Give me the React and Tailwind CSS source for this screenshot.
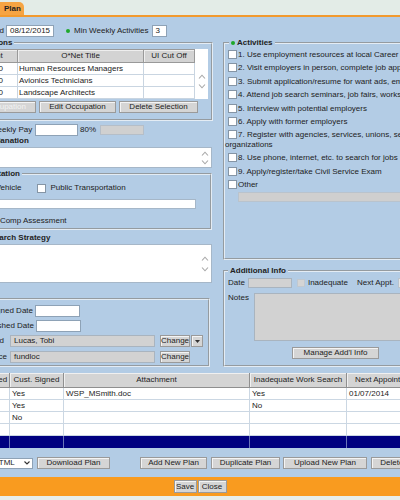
import React from 'react';

// shared looks for the old-school form controls
const fs = 'border-2 [border-style:groove] border-[#e4ecf4]';
const inp = 'h-[12px] bg-white border border-[#8ea2b6] px-[3px] leading-[10px]';
const gray = 'bg-[#d2d2d2] border border-[#a9b4bf]';
const btn = 'h-[12px] bg-[#d5d5d5] border border-[#9a9a9a] shadow-[inset_1px_1px_0_#f4f4f4] leading-[10px] text-center whitespace-nowrap';
const lbl = 'flex justify-end whitespace-nowrap shrink-0';

const Box = ({ className = '' }) => (
  <span className={`inline-block w-[9px] h-[9px] bg-white border border-[#8595a5] ${className}`} />
);

const Arrows = ({ gap }) => (
  <div className={`flex flex-col items-center justify-center w-[10px] ${gap}`}>
    <svg width="8" height="5" viewBox="0 0 8 5">
      <path d="M1 4.5 L4 1.2 L7 4.5" fill="none" stroke="#a8a8a8" strokeWidth="1.1" />
    </svg>
    <svg width="8" height="5" viewBox="0 0 8 5">
      <path d="M1 0.5 L4 3.8 L7 0.5" fill="none" stroke="#a8a8a8" strokeWidth="1.1" />
    </svg>
  </div>
);

const occupations = [
  ['10.00', 'Human Resources Managers'],
  ['10.00', 'Avionics Technicians'],
  ['10.00', 'Landscape Architects'],
];

const activities = [
  '1. Use employment resources at local Career Center',
  '2. Visit employers in person, complete job applications',
  '3. Submit application/resume for want ads, employers',
  '4. Attend job search seminars, job fairs, workshops',
  '5. Interview with potential employers',
  '6. Apply with former employers',
  '7. Register with agencies, services, unions, self-help organizations',
  '8. Use phone, internet, etc. to search for jobs',
  '9. Apply/register/take Civil Service Exam',
  'Other',
];

const planCols = [
  { label: 'Staff Signed', w: 'w-[48px]' },
  { label: 'Cust. Signed', w: 'w-[54px]' },
  { label: 'Attachment', w: 'w-[186px]' },
  { label: 'Inadequate Work Search', w: 'w-[97px]' },
  { label: 'Next Appointment', w: 'w-[80px]' },
];

const plans = [
  ['', 'Yes', 'WSP_MSmith.doc', 'Yes', '01/07/2014'],
  ['', 'Yes', '', 'No', ''],
  ['', 'No', '', '', ''],
  ['', '', '', '', ''],
];

export default function App() {
  return (
    <div className="w-[400px] h-[500px] overflow-hidden bg-[#b3cce5] font-['Liberation_Sans',Arial,sans-serif] text-[8px] leading-[10px] text-[#222]">
      <div className="h-[15px] bg-[#e3ece7] flex items-end">
        <div className="h-[13px] pl-[4px] pr-[3px] bg-[#f6a443] rounded-tr-[5px] font-bold leading-[13px]">Plan</div>
      </div>
      <div className="h-[2px] bg-[#f29a2e]" />

      <div className="ml-[-60px] w-[520px]">
        <div className="flex items-center h-[12px] mt-[8px]">
          <span className={`${lbl} w-[64px]`}>Plan Created</span>
          <div className={`${inp} ml-[2px] w-[48px]`}>08/12/2015</div>
          <span className="ml-[12px] w-[4px] h-[4px] rounded-full bg-[#1fa82a]" />
          <span className="ml-[4px]">Min Weekly Activities</span>
          <div className={`${inp} ml-[3px] w-[15px]`}>3</div>
        </div>

        <div className="flex items-start mt-[1px]">
          {/* left column */}
          <div className="w-[273px] shrink-0">
            <fieldset className={`${fs} ml-[15px] w-[258px] pb-[6px]`}>
              <legend className="ml-[5px] px-[2px] font-bold">Occupations</legend>
              <div className="flex mt-[1px] ml-[3px]">
                <div className="w-[235px]">
                  <div className="flex h-[14px] leading-[12px]">
                    <div className="w-[58px] bg-[#d3d3d3] border border-[#999] shadow-[inset_1px_1px_0_#eee] text-center">Percent</div>
                    <div className="w-[126px] bg-[#d3d3d3] border border-l-0 border-[#999] shadow-[inset_1px_1px_0_#eee] text-center">O*Net Title</div>
                    <div className="w-[51px] bg-[#d3d3d3] border border-l-0 border-[#999] shadow-[inset_1px_1px_0_#eee] text-center">UI Cut Off</div>
                  </div>
                  {occupations.map(([p, t]) => (
                    <div key={t} className="flex h-[12px] bg-white leading-[11px]">
                      <div className="w-[58px] border-r border-b border-[#c9d5e1] text-right pr-[14px]">{p}</div>
                      <div className="w-[126px] border-r border-b border-[#c9d5e1] pl-[1px] whitespace-nowrap">{t}</div>
                      <div className="w-[51px] border-r border-b border-[#c9d5e1]" />
                    </div>
                  ))}
                </div>
                <div className="w-[13px] bg-white flex pt-[14px] justify-center">
                  <Arrows gap="gap-[5px]" />
                </div>
              </div>
              <div className="flex gap-[3px] mt-[2px] ml-[2px]">
                <div className={`${btn} w-[77px] text-[#f2f2f2]`}>Add Occupation</div>
                <div className={`${btn} w-[77px]`}>Edit Occupation</div>
                <div className={`${btn} w-[79px]`}>Delete Selection</div>
              </div>
            </fieldset>

            <div className="flex items-center h-[12px] mt-[3px] ml-[35px]">
              <span className="w-[60px] whitespace-nowrap">Min Weekly Pay</span>
              <div className={`${inp} w-[43px]`} />
              <span className="ml-[2px] w-[20px]">80%</span>
              <div className="h-[10px] w-[44px] bg-[#d0d0d0] border border-[#b5bec8]" />
            </div>
            <div className="ml-[27px] font-bold whitespace-nowrap">Pay Explanation</div>
            <div className="ml-[33px] w-[239px] h-[21px] mt-[1px] bg-white border border-[#a6b7c8] flex justify-end pr-[1px]">
              <Arrows gap="gap-[4px]" />
            </div>

            <fieldset className={`${fs} ml-[15px] w-[257px] mt-[1px] pb-[2px]`}>
              <legend className="ml-[5px] px-[2px] font-bold">Transportation</legend>
              <div className="flex items-center h-[10px] mt-[4px]">
                <Box className="ml-[9px]" />
                <span className="ml-[2px] whitespace-nowrap">Own Vehicle</span>
                <Box className="ml-[16px]" />
                <span className="ml-[4px] whitespace-nowrap">Public Transportation</span>
              </div>
              <div className="ml-[9px] w-[230px] h-[10px] mt-[6px] bg-white border border-[#a6b7c8]" />
              <div className="flex items-center h-[10px] mt-[7px]">
                <Box className="ml-[11px]" />
                <span className="ml-[2px] whitespace-nowrap">Skills Comp Assessment</span>
              </div>
            </fieldset>

            <div className="ml-[33px] mt-[3px] font-bold whitespace-nowrap">Job Search Strategy</div>
            <div className="ml-[33px] w-[239px] h-[39px] mt-[1px] bg-white border border-[#a6b7c8] flex justify-end pr-[1px]">
              <Arrows gap="gap-[6px]" />
            </div>

            <fieldset className={`${fs} ml-[15px] w-[255px] mt-[15px] pb-[2px]`}>
              <div className="flex items-center h-[12px] mt-[5px]">
                <span className={`${lbl} w-[76px]`}>Staff Signed Date</span>
                <div className={`${inp} ml-[2px] w-[45px]`} />
              </div>
              <div className="flex items-center h-[12px] mt-[3px]">
                <span className={`${lbl} w-[77px]`}>Cust. Finished Date</span>
                <div className={`${inp} ml-[2px] w-[45px]`} />
              </div>
              <div className="flex items-center h-[12px] mt-[3px]">
                <span className={`${lbl} w-[47px]`}>Staff Assigned</span>
                <div className={`${gray} h-[12px] ml-[6px] w-[145px] pl-[3px] leading-[10px]`}>Lucas, Tobi</div>
                <div className={`${btn} ml-[5px] w-[30px]`}>Change</div>
                <div className={`${btn} ml-[1px] w-[12px] flex items-center justify-center`}>
                  <svg width="5" height="3" viewBox="0 0 5 3"><path d="M0 0 H5 L2.5 3 Z" fill="#333" /></svg>
                </div>
              </div>
              <div className="flex items-center h-[12px] mt-[4px]">
                <span className={`${lbl} w-[50px]`}>Funding Source</span>
                <div className={`${gray} h-[12px] ml-[3px] w-[145px] pl-[3px] leading-[10px]`}>fundloc</div>
                <div className={`${btn} ml-[5px] w-[30px]`}>Change</div>
              </div>
            </fieldset>
          </div>

          {/* right column */}
          <div className="ml-[10px] w-[232px] shrink-0">
            <fieldset className={`${fs} h-[222px]`}>
              <legend className="ml-[4px] px-[2px] font-bold flex items-center">
                <span className="w-[4px] h-[4px] rounded-full bg-[#1fa82a]" />
                <span className="ml-[2px]">Activities</span>
              </legend>
              <div className="pr-[6px]">
                {activities.map((a) => (
                  <div key={a} className="py-[2px] leading-[9.4px]">
                    <Box className="ml-[3px] mr-[1px] align-[-2px]" />
                    {a}
                  </div>
                ))}
              </div>
              <div className="ml-[13px] mt-[1px] h-[10px] w-[215px] bg-[#cfcfcf] border border-[#b9c3cd]" />
            </fieldset>

            <fieldset className={`${fs} h-[101px] mt-[6px]`}>
              <legend className="ml-[3px] px-[2px] font-bold">Additional Info</legend>
              <div className="flex items-center h-[10px] mt-[2px]">
                <span className="ml-[3px]">Date</span>
                <div className={`${gray} ml-[3px] w-[44px] h-[10px]`} />
                <span className="ml-[5px] w-[8px] h-[8px] bg-[#d4d4d4] border border-[#c0c8d0]" />
                <span className="ml-[3px]">Inadequate</span>
                <span className="ml-[9px] whitespace-nowrap">Next Appt.</span>
                <div className="ml-[4px] w-[40px] h-[10px] bg-[#e6e6e6] border border-[#b9c3cd]" />
              </div>
              <div className="flex items-start mt-[5px]">
                <span className="ml-[3px] w-[26px] leading-[9px]">Notes</span>
                <div className={`${gray} w-[190px] h-[48px]`} />
              </div>
              <div className={`${btn} ml-[67px] mt-[6px] w-[87px]`}>Manage Add'l Info</div>
            </fieldset>
          </div>
        </div>

        {/* plans grid */}
        <div className="ml-[22px] mt-[6px] w-[490px]">
          <div className="flex h-[15px] leading-[13px]">
            {planCols.map((c) => (
              <div key={c.label} className={`${c.w} shrink-0 bg-[#d4d4d4] border-r border-b border-[#8f8f8f] shadow-[inset_1px_1px_0_#f0f0f0] text-center whitespace-nowrap`}>{c.label}</div>
            ))}
            <div className="w-[60px] shrink-0 bg-[#d4d4d4] border-b border-[#8f8f8f]" />
          </div>
          {plans.map((r, i) => (
            <div key={i} className="flex h-[12px] bg-white leading-[11px]">
              {r.map((v, j) => (
                <div key={j} className={`${planCols[j].w} shrink-0 border-r border-b border-[#cbd7e3] pl-[2px] whitespace-nowrap`}>{v}</div>
              ))}
              <div className="w-[60px] shrink-0 border-b border-[#cbd7e3]" />
            </div>
          ))}
          <div className="flex h-[12px] bg-[#000080]">
            {planCols.map((c) => (
              <div key={c.label} className={`${c.w} shrink-0 border-r border-[#6a74b8]`} />
            ))}
          </div>
        </div>

        <div className="flex items-center h-[12px] mt-[9px]">
          <div className="ml-[48px] w-[45px] h-[11px] bg-white border border-[#8ea2b6] flex items-center justify-between pl-[4px] pr-[2px]">
            <span>HTML</span>
            <svg width="6" height="4" viewBox="0 0 6 4"><path d="M0.5 0.5 L3 3 L5.5 0.5" fill="none" stroke="#333" strokeWidth="1.1" /></svg>
          </div>
          <div className={`${btn} ml-[4px] w-[73px]`}>Download Plan</div>
          <div className={`${btn} ml-[30px] w-[67px]`}>Add New Plan</div>
          <div className={`${btn} ml-[4px] w-[69px]`}>Duplicate Plan</div>
          <div className={`${btn} ml-[3px] w-[84px]`}>Upload New Plan</div>
          <div className={`${btn} ml-[4px] w-[60px]`}>Delete Plan</div>
        </div>
      </div>

      <div className="mt-[8px] h-[19px] bg-[#f99b1f] flex items-center justify-center gap-[1px]">
        <div className={`${btn} h-[13px] w-[23px] leading-[11px]`}>Save</div>
        <div className={`${btn} h-[13px] w-[29px] leading-[11px]`}>Close</div>
      </div>
      <div className="h-[10px] bg-[#e8eee9]" />
    </div>
  );
}
